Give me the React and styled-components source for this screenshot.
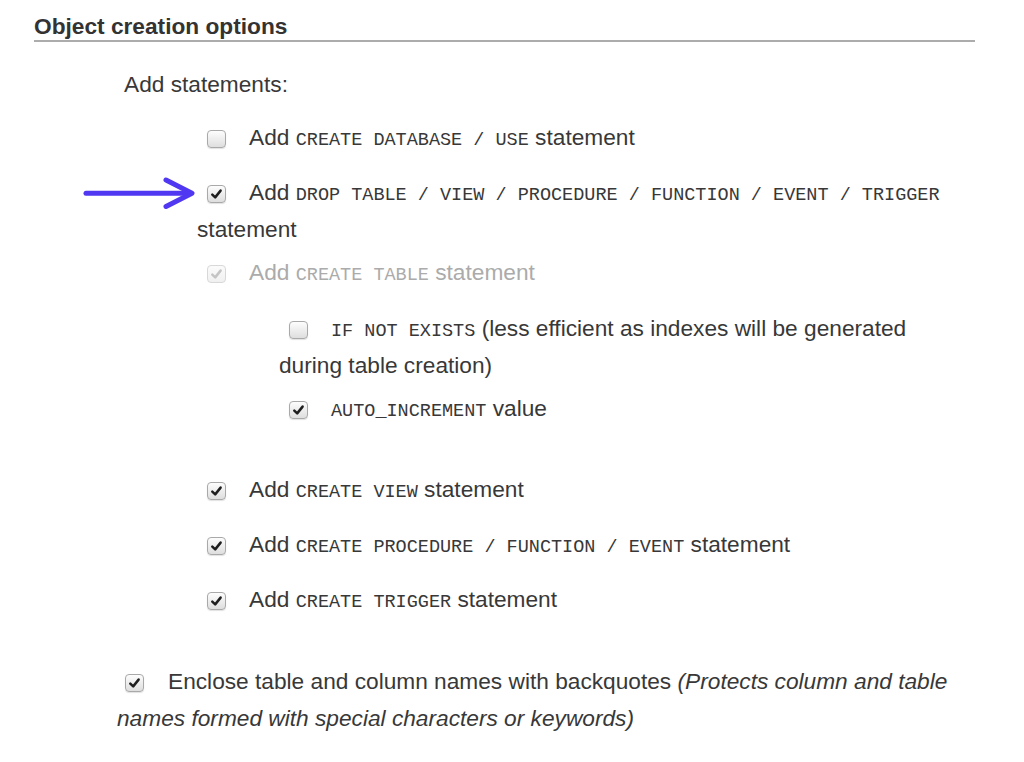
import React from "react";
import styled, { createGlobalStyle } from "styled-components";

const Global = createGlobalStyle`
  html, body { margin: 0; padding: 0; background: #ffffff; }
  body {
    font-family: "Liberation Sans", Arial, Helvetica, sans-serif;
    color: #383838;
  }
`;

const Page = styled.div`
  position: relative;
  width: 941px;
  padding: 13px 0 40px 34px;
  font-size: 22.7px;
`;

const Heading = styled.h2`
  margin: 0;
  font-size: 22.7px;
  font-weight: bold;
  line-height: 26px;
  color: #333333;
  padding-bottom: 1px;
  border-bottom: 2px solid #acacac;
`;

const Body = styled.div`
  display: flex;
  flex-direction: column;
  padding-top: 23.5px;
`;

const Para = styled.p`
  margin: 0 0 16px 90px;
  line-height: 37px;
`;

const List = styled.ul`
  list-style: none;
  display: flex;
  flex-direction: column;
  gap: 18px;
  margin: 0;
  padding: 0 0 0 ${(p) => p.$indent}px;
`;

const SubList = styled(List)`
  margin: 19px 0 26px;
`;

const Footer = styled(List)`
  margin-top: 45px;
`;

const Item = styled.li`
  line-height: 37px;
  color: ${(p) => (p.$disabled ? "#ababab" : "#383838")};
  margin-bottom: ${(p) => (p.$wrapped ? "-12px" : "0")};
`;

const Code = styled.code`
  font-family: "Liberation Mono", "Courier New", monospace;
  font-size: 18.5px;
  line-height: 1;
`;

const Em = styled.em`
  font-style: italic;
`;

const Box = styled.span`
  display: inline-block;
  box-sizing: border-box;
  width: 19px;
  height: 18px;
  margin: 0 ${(p) => (p.$wide ? 24 : 23)}px 0 ${(p) => (p.$wide ? 8 : 10)}px;
  vertical-align: middle;
  border-radius: 4px;
  border: 1px solid ${(p) => (p.$disabled ? "#d8d8d8" : "#a9a9a9")};
  background: ${(p) =>
    p.$disabled
      ? "linear-gradient(#fbfbfb, #f0f0f0)"
      : "linear-gradient(#fdfdfd, #dedede)"};
  box-shadow: ${(p) =>
    p.$disabled ? "none" : "0 1px 1px rgba(0,0,0,0.12)"};
  svg {
    display: block;
    width: 17px;
    height: 16px;
  }
`;

const Arrow = styled.svg`
  position: absolute;
  left: 83px;
  top: 175.5px;
  width: 114px;
  height: 34px;
`;

function Check({ checked, disabled, wide }) {
  return (
    <Box $disabled={disabled} $wide={wide}>
      {checked && (
        <svg viewBox="0 0 17 16">
          <path
            d="M4.3 8.6 L7.2 11.4 L12.6 4.6"
            fill="none"
            stroke={disabled ? "#c4c4c4" : "#1e1e1e"}
            strokeWidth="2.5"
            strokeLinecap="round"
            strokeLinejoin="round"
          />
        </svg>
      )}
    </Box>
  );
}

export default function App() {
  return (
    <>
      <Global />
      <Page>
        <Heading>Object creation options</Heading>
        <Body>
          <Para>Add statements:</Para>
          <List $indent={163}>
            <Item>
              <Check />
              Add <Code>CREATE DATABASE / USE</Code> statement
            </Item>
            <Item $wrapped>
              <Check checked />
              Add <Code>DROP TABLE / VIEW / PROCEDURE / FUNCTION / EVENT / TRIGGER</Code> statement
            </Item>
            <Item $disabled>
              <Check checked disabled />
              Add <Code>CREATE TABLE</Code> statement
              <SubList $indent={82}>
                <Item $wrapped>
                  <Check />
                  <Code>IF NOT EXISTS</Code> (less efficient as indexes will be generated during table creation)
                </Item>
                <Item>
                  <Check checked />
                  <Code>AUTO_INCREMENT</Code> value
                </Item>
              </SubList>
            </Item>
            <Item>
              <Check checked />
              Add <Code>CREATE VIEW</Code> statement
            </Item>
            <Item>
              <Check checked />
              Add <Code>CREATE PROCEDURE / FUNCTION / EVENT</Code> statement
            </Item>
            <Item>
              <Check checked />
              Add <Code>CREATE TRIGGER</Code> statement
            </Item>
          </List>
          <Footer $indent={83}>
            <Item>
              <Check checked wide />
              Enclose table and column names with backquotes{" "}
              <Em>(Protects column and table names formed with special characters or keywords)</Em>
            </Item>
          </Footer>
        </Body>
        <Arrow viewBox="0 0 114 34">
          <g
            fill="none"
            stroke="#5038f2"
            strokeWidth="5"
            strokeLinecap="round"
            strokeLinejoin="round"
          >
            <line x1="3" y1="17.2" x2="106" y2="17.2" />
            <polyline points="83,4 109,17.2 83,30.5" />
          </g>
        </Arrow>
      </Page>
    </>
  );
}
